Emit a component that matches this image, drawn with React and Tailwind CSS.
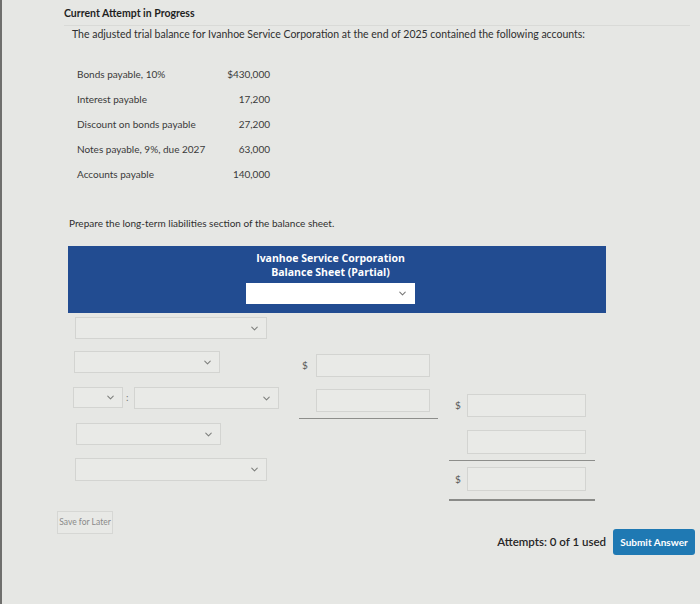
import { ChevronDown } from 'lucide-react';

const rows = [
  ['Bonds payable, 10%', '$430,000'],
  ['Interest payable', '17,200'],
  ['Discount on bonds payable', '27,200'],
  ['Notes payable, 9%, due 2027', '63,000'],
  ['Accounts payable', '140,000'],
];

function Select({ className = '', chevron = 'text-[#7d7f7c]' }) {
  return (
    <div className={`flex items-center justify-end border border-[#d3d4d1] bg-[#e9eae7] pr-[6px] ${className}`}>
      <ChevronDown className={`h-[11px] w-[11px] ${chevron}`} strokeWidth={2.25} />
    </div>
  );
}

function Input({ className = '' }) {
  return <div className={`border border-[#d3d4d1] bg-[#e9eae7] ${className}`} />;
}

function Dollar({ className = '' }) {
  return <span className={`text-[10px] text-[#555] ${className}`}>$</span>;
}

export default function App() {
  return (
    <div className="relative h-[604px] w-[700px] overflow-hidden border-l-2 border-[#6f6f6d] bg-[#e6e7e4] font-['Lato',sans-serif] text-[#2b2b2b]">
      <div className="pl-[62px] pt-[6px]">
        <p className="text-[10.5px] font-bold leading-[14px] text-[#1f1f1f]">Current Attempt in Progress</p>
        <div className="mr-[10px] mt-[5px] h-px bg-[#d9dad7]" />
        <p className="ml-[8px] mt-px text-[10.5px] leading-[14px] text-[#2f2f2f]">
          The adjusted trial balance for Ivanhoe Service Corporation at the end of 2025 contained the following accounts:
        </p>

        <div className="ml-[13px] mt-[21px] w-[193px] text-[10px] text-[#3a3a3a]">
          {rows.map(([label, value]) => (
            <div key={label} className="flex h-[25px] items-center justify-between">
              <span>{label}</span>
              <span>{value}</span>
            </div>
          ))}
        </div>

        <p className="ml-[5px] mt-[29px] text-[10px] leading-[14px] text-[#2f2f2f]">
          Prepare the long-term liabilities section of the balance sheet.
        </p>

        <div className="ml-[4px] mt-[16px] flex h-[67px] w-[538px] flex-col items-center bg-[#224c91] pr-[13px] pt-[5px] font-['Open_Sans',sans-serif] text-white">
          <p className="text-[10.5px] font-bold leading-[14px]">Ivanhoe Service Corporation</p>
          <p className="text-[10.5px] font-bold leading-[14px]">Balance Sheet (Partial)</p>
          <Select className="mt-[4px] h-[21px] w-[169px] border-white bg-white" chevron="text-[#777]" />
        </div>
      </div>

      <div className="pl-[70px] pt-[4px]">
        <div className="flex h-[34px] items-start pl-[3px]">
          <Select className="h-[22px] w-[192px]" />
        </div>

        <div className="flex h-[36px] items-start">
          <Select className="ml-[2px] h-[22px] w-[146px]" />
          <div className="ml-[82px] flex items-center pt-[3px]">
            <Dollar className="w-[14px]" />
            <Input className="h-[23px] w-[114px]" />
          </div>
        </div>

        <div className="flex h-[36px] items-start">
          <Select className="ml-[1px] h-[21px] w-[50px]" />
          <span className="ml-[3px] w-[8px] text-[10px] leading-[21px] text-[#777]">:</span>
          <Select className="h-[22px] w-[145px]" />
          <div className="ml-[37px] flex flex-col pt-[2px]">
            <Input className="h-[23px] w-[114px]" />
            <div className="-ml-[17px] mt-[6px] h-px w-[139px] bg-[#8d8e8b]" />
          </div>
          <div className="ml-[17px] flex items-center pt-[7px]">
            <Dollar className="w-[12px]" />
            <Input className="h-[23px] w-[119px]" />
          </div>
        </div>

        <div className="flex h-[35px] items-start">
          <Select className="ml-[4px] h-[22px] w-[145px]" />
          <div className="ml-[246px] flex flex-col pt-[7px]">
            <Input className="h-[24px] w-[119px]" />
            <div className="-ml-[18px] mt-[6px] h-px w-[146px] bg-[#8d8e8b]" />
          </div>
        </div>

        <div className="flex items-start">
          <Select className="ml-[3px] h-[23px] w-[192px]" />
          <div className="ml-[188px] flex flex-col pt-[9px]">
            <div className="flex items-center">
              <Dollar className="w-[12px]" />
              <Input className="h-[24px] w-[119px]" />
            </div>
            <div className="-ml-[6px] mt-[8px] h-[2px] w-[146px] bg-[#8a8b88]" />
          </div>
        </div>
      </div>

      <div className="flex items-start pl-[55px] pt-[10px]">
        <button className="h-[23px] w-[56px] whitespace-nowrap border border-[#d6d7d4] bg-[#e8e9e6] px-0 text-[8.5px] text-[#8a8a8a]">
          Save for Later
        </button>
        <div className="ml-auto mr-[5px] mt-[18px] flex items-center">
          <span className="text-[11.5px] font-semibold text-[#262626]">Attempts: 0 of 1 used</span>
          <button className="ml-[7px] h-[26px] w-[82px] rounded-[3px] bg-[#1f79b3] text-[10px] font-bold text-white">
            Submit Answer
          </button>
        </div>
      </div>
    </div>
  );
}
